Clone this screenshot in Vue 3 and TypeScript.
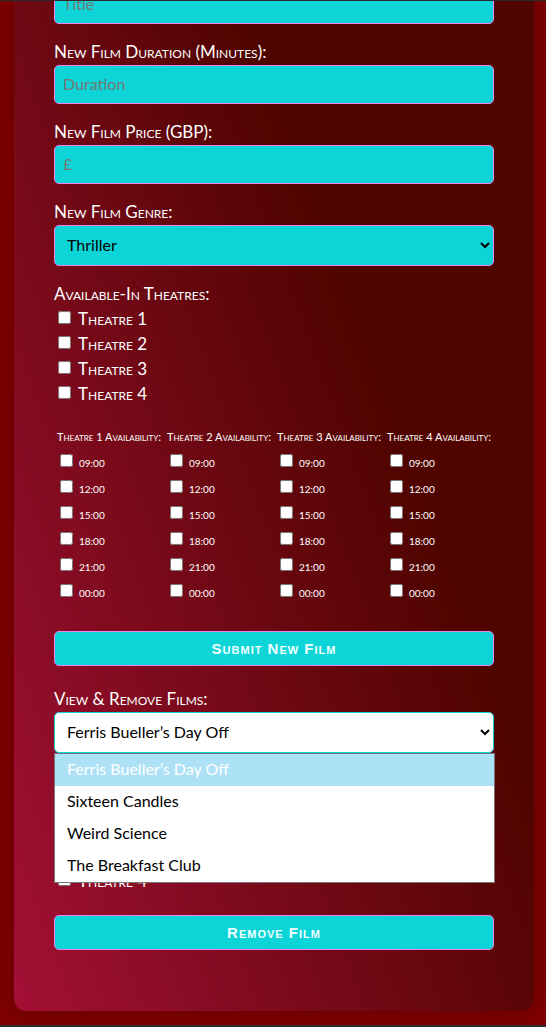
<script setup lang="ts">
import { ref } from 'vue'

const theatres: number[] = [1, 2, 3, 4]
const times: string[] = ['09:00', '12:00', '15:00', '18:00', '21:00', '00:00']
const films: string[] = ['Ferris Bueller’s Day Off', 'Sixteen Candles', 'Weird Science', 'The Breakfast Club']

const title = ref('')
const duration = ref('')
const price = ref('')
const genre = ref('Thriller')
const film = ref(films[0])
</script>

<template>
  <main class="page">
    <form class="panel" @submit.prevent>
      <div class="field">
        <input id="title" v-model="title" class="control" type="text" placeholder="Title" aria-label="Title" />
      </div>
      <div class="field">
        <label class="caption" for="duration">New Film Duration (Minutes):</label>
        <input id="duration" v-model="duration" class="control" type="text" placeholder="Duration" />
      </div>
      <div class="field">
        <label class="caption" for="price">New Film Price (GBP):</label>
        <input id="price" v-model="price" class="control" type="text" placeholder="£" />
      </div>
      <div class="field">
        <label class="caption" for="genre">New Film Genre:</label>
        <select id="genre" v-model="genre" class="control select">
          <option>Thriller</option>
        </select>
      </div>

      <fieldset class="group">
        <legend class="caption">Available-In Theatres:</legend>
        <label v-for="n in theatres" :key="n" class="check">
          <input type="checkbox" />
          <span>Theatre {{ n }}</span>
        </label>
      </fieldset>

      <table class="slots">
        <thead>
          <tr>
            <th v-for="n in theatres" :key="n" scope="col">Theatre {{ n }} Availability:</th>
          </tr>
        </thead>
        <tbody>
          <tr v-for="time in times" :key="time">
            <td v-for="n in theatres" :key="n">
              <label class="slot">
                <input type="checkbox" />
                <span>{{ time }}</span>
              </label>
            </td>
          </tr>
        </tbody>
      </table>

      <button class="action" type="submit">Submit New Film</button>

      <div class="field films">
        <label class="caption" for="film">View &amp; Remove Films:</label>
        <div class="picker">
          <select id="film" v-model="film" class="control select open">
            <option>{{ films[0] }}</option>
          </select>
          <ul class="menu" role="listbox" aria-label="Films">
            <li v-for="f in films" :key="f" role="option" :aria-selected="f === film" :class="{ active: f === film }">
              {{ f }}
            </li>
          </ul>
        </div>
      </div>

      <label class="check covered">
        <input type="checkbox" />
        <span>Theatre 4</span>
      </label>

      <button class="action remove" type="button">Remove Film</button>
    </form>
  </main>
</template>

<style>
body {
  margin: 0;
  background: #800000;
}
</style>

<style scoped>
.page {
  box-sizing: border-box;
  min-height: 100vh;
  overflow: hidden;
  padding: 0 12px 14px 14px;
  border-top: 1px solid #2a2a2e;
  border-bottom: 2px solid #2a2a2e;
  background: #800000;
  color: #fff;
  font-family: Lato, "Open Sans", sans-serif;
  font-size: 16px;
}

.panel {
  display: flex;
  flex-direction: column;
  margin-top: -72px;
  padding: 40px 40px 61px;
  border-radius: 12px;
  background: linear-gradient(70deg, #a31035 0, #500400 555px);
  box-shadow: 0 0 28px rgba(0, 0, 0, 0.23);
}

.field {
  display: flex;
  flex-direction: column;
  padding-top: 16px;
}

.caption {
  padding-bottom: 2px;
  font-size: 17px;
  font-variant: small-caps;
  line-height: 23px;
}

.control {
  box-sizing: border-box;
  width: 100%;
  height: 39px;
  margin: 0;
  padding: 7px 8px 9px;
  border: 1px solid #ee82ee;
  border-radius: 5px;
  outline: 0;
  background-color: #0dd5d7;
  color: #000;
  font: inherit;
}

.control::placeholder {
  color: #757575;
}

.select {
  height: 41px;
}

.open {
  display: block;
  border-color: #0dd5d7;
  background-color: #fff;
}

.group {
  display: flex;
  flex-direction: column;
  min-width: 0;
  margin: 0;
  padding: 0;
  border: 0;
}

.group legend {
  padding: 16px 0 2px;
}

.check {
  display: flex;
  align-items: flex-start;
  gap: 7px;
  height: 25px;
  font-size: 17px;
  font-variant: small-caps;
  line-height: 23px;
}

input[type="checkbox"] {
  flex: none;
  width: 13px;
  height: 13px;
  margin: 4px 0 0 4px;
}

.slots {
  margin-top: 20px;
  border-collapse: collapse;
  font-size: 10px;
}

.slots th {
  padding: 0 3px 4px;
  font-size: 11px;
  font-weight: 400;
  font-variant: small-caps;
  line-height: 20px;
  text-align: left;
  white-space: nowrap;
}

.slots td {
  padding: 0 3px;
}

.slot {
  display: flex;
  align-items: flex-start;
  gap: 6px;
  height: 26px;
  line-height: 24px;
}

.slot input[type="checkbox"] {
  margin: 3px 0 0 3px;
}

.action {
  height: 35px;
  margin: 24px 0 0;
  padding: 0;
  border: 1px solid #ee82ee;
  border-radius: 5px;
  background: #0dd5d7;
  color: #f0ffff;
  font-family: "Liberation Sans", Arial, sans-serif;
  font-size: 15px;
  font-weight: 700;
  font-variant: small-caps;
  letter-spacing: 1px;
}

.films {
  padding-top: 21px;
}

.picker {
  position: relative;
}

.menu {
  position: absolute;
  top: 100%;
  left: 0;
  right: -1px;
  margin: 0;
  padding: 0;
  border: 1px solid #767676;
  background: #fff;
  color: #000;
  list-style: none;
}

.menu li {
  padding: 0 12px 2px;
  line-height: 30px;
}

.menu .active {
  background: #ade1f5;
  color: #fff;
}

.covered {
  margin-top: 116px;
}

.remove {
  margin-top: 21px;
}
</style>
